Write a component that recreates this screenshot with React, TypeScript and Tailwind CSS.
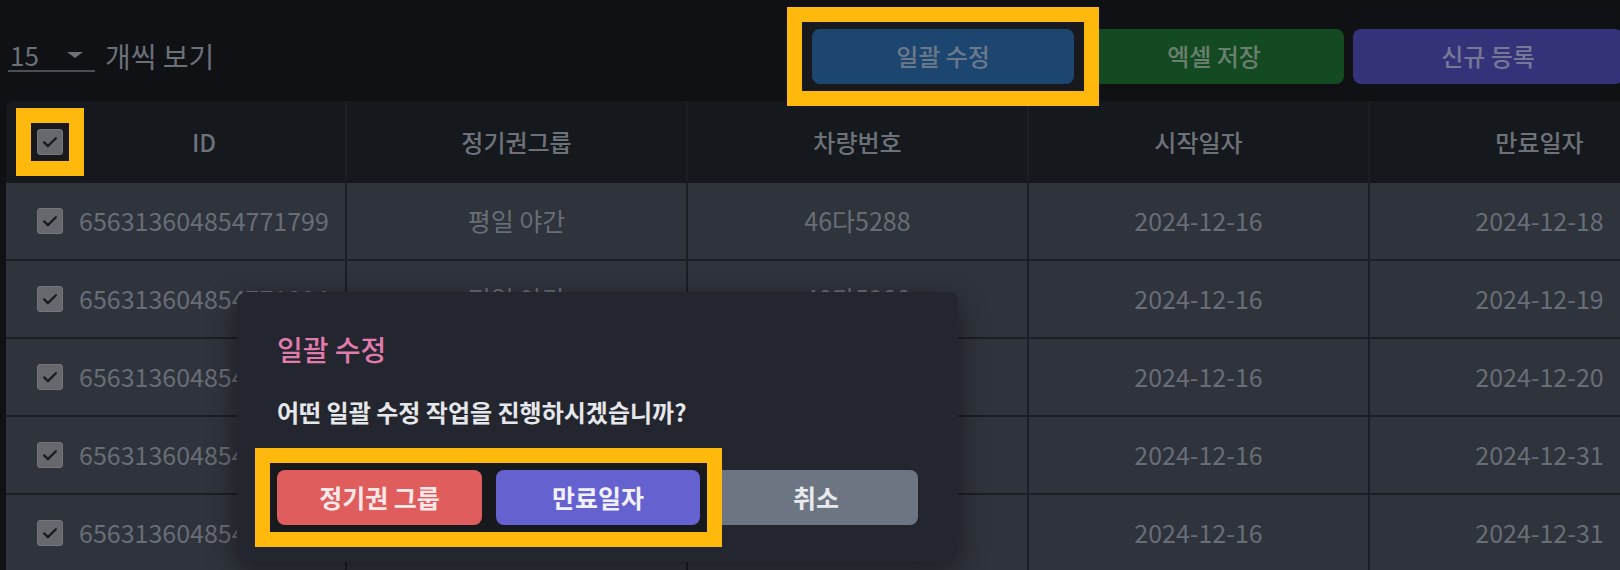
import type { ReactNode } from "react";

type Row = { id: string; group: string; car: string; start: string; end: string };

const rows: Row[] = [
  { id: "656313604854771799", group: "평일 야간", car: "46다5288", start: "2024-12-16", end: "2024-12-18" },
  { id: "656313604854771804", group: "평일 야간", car: "48다5288", start: "2024-12-16", end: "2024-12-19" },
  { id: "656313604854771805", group: "평일 주간", car: "12가3456", start: "2024-12-16", end: "2024-12-20" },
  { id: "656313604854771806", group: "주말 전일", car: "33나7421", start: "2024-12-16", end: "2024-12-31" },
  { id: "656313604854771807", group: "주말 전일", car: "57라1180", start: "2024-12-16", end: "2024-12-31" },
];

// yellow annotation frame drawn over the content
function Highlight({ children, className }: { children: ReactNode; className: string }) {
  return (
    <div className={`relative z-10 bg-[#18191d] outline-solid outline-[15px] outline-[#ffb80c] ${className}`}>
      {children}
    </div>
  );
}

function Checkbox() {
  return (
    <span className="flex h-[26px] w-[26px] shrink-0 items-center justify-center rounded-[3px] border border-[#74767b] bg-[#66686d]">
      <svg viewBox="0 0 24 24" className="h-[20px] w-[20px]" fill="none" stroke="#1b1c20" strokeWidth="2.8" strokeLinecap="round" strokeLinejoin="round">
        <path d="M5 12.5l4.5 4.5L19 7.5" />
      </svg>
    </span>
  );
}

export default function App() {
  const headers = ["정기권그룹", "차량번호", "시작일자", "만료일자"];

  return (
    <div className="relative h-[570px] w-[1620px] overflow-hidden bg-[#0f1115] font-['Noto_Sans_CJK_KR',sans-serif]">
      {/* 상단 바 */}
      <div className="flex h-[101px] items-center pt-[11px]">
        <div className="ml-[8px] flex items-center">
          <div className="flex w-[87px] items-center border-b-2 border-[#4a4f57] text-[26px] leading-[30px] text-[#6b7079]">
            <span className="ml-[2px]">15</span>
            <span className="ml-auto mr-[12px] h-0 w-0 border-l-[8px] border-r-[8px] border-t-[6px] border-l-transparent border-r-transparent border-t-[#6b7079]" />
          </div>
          <span className="ml-[10px] text-[28px] leading-[30px] text-[#6b7079]">개씩 보기</span>
        </div>

        <div className="-mr-[3px] ml-auto flex">
          <Highlight className="-mx-[10px] -my-[7px] px-[10px] py-[7px]">
            <button className="h-[55px] w-[262px] rounded-[8px] bg-[#1c4670] text-[24px] font-medium text-[#6b7889]">일괄 수정</button>
          </Highlight>
          <button className="ml-[10px] h-[55px] w-[260px] rounded-[8px] bg-[#134a21] text-[24px] font-medium text-[#6b7f70]">엑셀 저장</button>
          <button className="ml-[9px] h-[55px] w-[270px] rounded-[8px] bg-[#34337a] text-[24px] font-medium text-[#767896]">신규 등록</button>
        </div>
      </div>

      {/* 테이블 */}
      <div className="ml-[6px] grid w-max grid-cols-[repeat(5,341px)]">
        <div className="flex h-[82px] items-center rounded-tl-[8px] border-r-2 border-[#1b1e23] bg-[#15181c] pl-[31px]">
          <Highlight className="-m-[6px] p-[6px]">
            <Checkbox />
          </Highlight>
          <span className="flex-1 text-center text-[24px] font-medium text-[#6d727a]">ID</span>
        </div>
        {headers.map((h) => (
          <div
            key={h}
            className="flex h-[82px] items-center justify-center border-r-2 border-[#1b1e23] bg-[#15181c] text-[24px] font-medium text-[#6d727a]"
          >
            {h}
          </div>
        ))}

        {rows.map((r) => (
          <div key={r.id} className="contents text-[25px] text-[#686d76]">
            <div className="flex h-[78px] items-center border-b-2 border-r-2 border-[#1b1e23] bg-[#2f333b] pl-[31px]">
              <Checkbox />
              <span className="ml-[16px]">{r.id}</span>
            </div>
            <div className="flex h-[78px] items-center justify-center border-b-2 border-r-2 border-[#1b1e23] bg-[#2f333b]">{r.group}</div>
            <div className="flex h-[78px] items-center justify-center border-b-2 border-r-2 border-[#1b1e23] bg-[#2f333b]">{r.car}</div>
            <div className="flex h-[78px] items-center justify-center border-b-2 border-r-2 border-[#1b1e23] bg-[#2f333b]">{r.start}</div>
            <div className="flex h-[78px] items-center justify-center border-b-2 border-r-2 border-[#1b1e23] bg-[#2f333b]">{r.end}</div>
          </div>
        ))}
      </div>

      {/* 일괄 수정 다이얼로그 */}
      <div className="absolute left-[237px] top-[292px] z-20 w-[721px] rounded-[10px] bg-[#23262e] px-[40px] pb-[37px] pt-[38px] shadow-[0_8px_30px_rgba(0,0,0,0.45)]">
        <h2 className="text-[28px] font-medium leading-[38px] text-[#e07bab]">일괄 수정</h2>
        <p className="mt-[27px] text-[24px] font-semibold leading-[34px] text-[#e6e7ea]">어떤 일괄 수정 작업을 진행하시겠습니까?</p>
        <div className="mt-[41px] flex gap-[14px]">
          <Highlight className="-m-[7px] flex gap-[14px] p-[7px]">
            <button className="h-[55px] w-[205px] rounded-[8px] bg-[#df5d5d] text-[25px] font-semibold text-[#fbe9e9]">정기권 그룹</button>
            <button className="h-[55px] w-[204px] rounded-[8px] bg-[#6561cf] text-[25px] font-semibold text-[#f1f0ff]">만료일자</button>
          </Highlight>
          <button className="h-[55px] w-[204px] rounded-[8px] bg-[#6c7581] text-[25px] font-semibold text-[#e8eaee]">취소</button>
        </div>
      </div>
    </div>
  );
}
